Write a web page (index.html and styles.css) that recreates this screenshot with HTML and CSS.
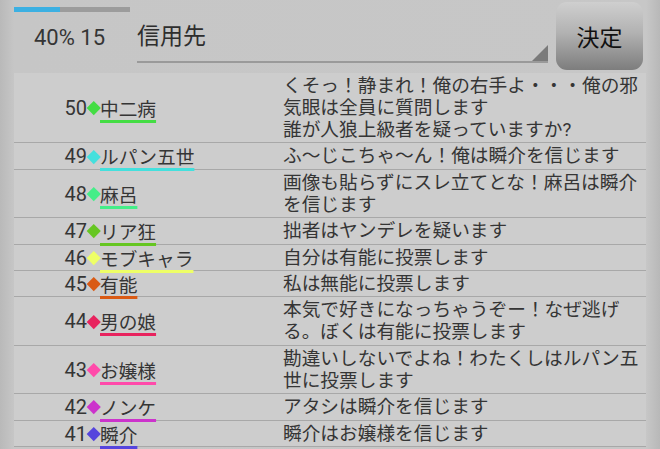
FILE: index.html
```html
<!DOCTYPE html>
<html lang="ja">
<head>
<meta charset="utf-8">
<title>投票</title>
<link rel="stylesheet" href="styles.css">
</head>
<body>
<div class="app">
  <header class="header">
    <div class="status">
      <div class="progress"><div class="progress-fill" style="width:40%"></div></div>
      <div class="status-text">40% 15</div>
    </div>
    <div class="spinner">
      <span class="spinner-text">信用先</span>
      <span class="spinner-arrow"></span>
    </div>
    <button class="decide">決定</button>
  </header>
  <div class="list">
    <div class="row">
      <span class="num">50</span><span class="dia c50"></span><span class="name-cell"><span class="name u50">中二病</span></span>
      <span class="msg">くそっ！静まれ！俺の右手よ・・・俺の邪気眼は全員に質問します<br>誰が人狼上級者を疑っていますか?</span>
    </div>
    <div class="row">
      <span class="num">49</span><span class="dia c49"></span><span class="name-cell"><span class="name u49">ルパン五世</span></span>
      <span class="msg">ふ～じこちゃ～ん！俺は瞬介を信じます</span>
    </div>
    <div class="row">
      <span class="num">48</span><span class="dia c48"></span><span class="name-cell"><span class="name u48">麻呂</span></span>
      <span class="msg">画像も貼らずにスレ立てとな！麻呂は瞬介を信じます</span>
    </div>
    <div class="row">
      <span class="num">47</span><span class="dia c47"></span><span class="name-cell"><span class="name u47">リア狂</span></span>
      <span class="msg">拙者はヤンデレを疑います</span>
    </div>
    <div class="row">
      <span class="num">46</span><span class="dia c46"></span><span class="name-cell"><span class="name u46">モブキャラ</span></span>
      <span class="msg">自分は有能に投票します</span>
    </div>
    <div class="row">
      <span class="num">45</span><span class="dia c45"></span><span class="name-cell"><span class="name u45">有能</span></span>
      <span class="msg">私は無能に投票します</span>
    </div>
    <div class="row">
      <span class="num">44</span><span class="dia c44"></span><span class="name-cell"><span class="name u44">男の娘</span></span>
      <span class="msg">本気で好きになっちゃうぞー！なぜ逃げる。ぼくは有能に投票します</span>
    </div>
    <div class="row">
      <span class="num">43</span><span class="dia c43"></span><span class="name-cell"><span class="name u43">お嬢様</span></span>
      <span class="msg">勘違いしないでよね！わたくしはルパン五世に投票します</span>
    </div>
    <div class="row">
      <span class="num">42</span><span class="dia c42"></span><span class="name-cell"><span class="name u42">ノンケ</span></span>
      <span class="msg">アタシは瞬介を信じます</span>
    </div>
    <div class="row">
      <span class="num">41</span><span class="dia c41"></span><span class="name-cell"><span class="name u41">瞬介</span></span>
      <span class="msg">瞬介はお嬢様を信じます</span>
    </div>
  </div>
</div>
</body>
</html>
```

FILE: styles.css
```css
* { box-sizing: border-box; }
html, body {
  margin: 0;
  padding: 0;
  width: 660px;
  height: 449px;
  overflow: hidden;
}
body {
  background: linear-gradient(to right, #b9b9b9 0px, #c6c6c6 14px, #c7c7c7 646px, #b8b8b8 660px);
  font-family: Roboto, "Noto Sans CJK JP", sans-serif;
  color: #353535;
}
.app {
  width: 660px;
  height: 449px;
}
.header {
  height: 73px;
  display: flex;
  align-items: flex-start;
}
.status {
  width: 137px;
  padding-left: 14px;
  padding-top: 7px;
}
.progress {
  width: 116px;
  height: 5px;
  background: #9c9c9c;
}
.progress-fill {
  height: 5px;
  background: #3cb0e2;
}
.status-text {
  margin-top: 13px;
  padding-left: 20px;
  font-size: 22px;
  line-height: 26px;
  color: #353535;
}
.spinner {
  position: relative;
  width: 411px;
  height: 63px;
  border-bottom: 2px solid #9a9a9a;
  padding-top: 19px;
}
.spinner-text {
  font-family: "Noto Sans CJK JP", sans-serif;
  font-size: 23px;
  line-height: 30px;
  color: #2e2e2e;
}
.spinner-arrow {
  position: absolute;
  right: 0;
  bottom: 0;
  width: 0;
  height: 0;
  border-left: 16px solid transparent;
  border-bottom: 16px solid #7a7a7a;
}
.decide {
  margin-left: 8px;
  margin-top: 2px;
  width: 87px;
  height: 68px;
  border: none;
  border-radius: 11px;
  background: linear-gradient(to bottom, #cfcfcf 0%, #b2b2b2 45%, #7d7d7d 100%);
  font-family: "Noto Sans CJK JP", sans-serif;
  font-size: 23px;
  color: #111;
  padding: 0;
}
.list {
  margin-left: 14px;
  width: 632px;
  background: #cdcdcd;
}
.row {
  display: grid;
  grid-template-columns: 73px 13px 183px 1fr;
  align-items: center;
  border-bottom: 1px solid #a8a8a8;
  padding: 2px 0 1.4px 0;
  font-size: 18.7px;
}
.num {
  text-align: right;
  font-size: 20px;
  line-height: 22px;
}
.dia {
  justify-self: center;
  width: 9.5px;
  height: 9.5px;
  transform: rotate(45deg);
}
.name-cell {
  line-height: 22px;
  height: 22px;
}
.name {
  font-family: "Noto Sans CJK JP", sans-serif;
  line-height: 22px;
  text-decoration-line: underline;
  text-decoration-thickness: 3px;
  text-underline-offset: 4px;
  text-decoration-skip-ink: none;
}
.msg {
  font-family: Roboto, "Noto Sans CJK JP", sans-serif;
  line-height: 22px;
  padding-right: 4px;
}
.c50 { background: #44dd44; }
.c49 { background: #44e0dd; }
.c48 { background: #44ee88; }
.c47 { background: #66c622; }
.c46 { background: #eeff66; }
.c45 { background: #d95a14; }
.c44 { background: #e8235e; }
.c43 { background: #ff4aaa; }
.c42 { background: #cc33cc; }
.c41 { background: #5544dd; }
.u50 { text-decoration-color: #44dd44; }
.u49 { text-decoration-color: #44e0dd; }
.u48 { text-decoration-color: #44ee88; }
.u47 { text-decoration-color: #66c622; }
.u46 { text-decoration-color: #eeff66; }
.u45 { text-decoration-color: #d95a14; }
.u44 { text-decoration-color: #e8235e; }
.u43 { text-decoration-color: #ff4aaa; }
.u42 { text-decoration-color: #cc33cc; }
.u41 { text-decoration-color: #5544dd; }
```
